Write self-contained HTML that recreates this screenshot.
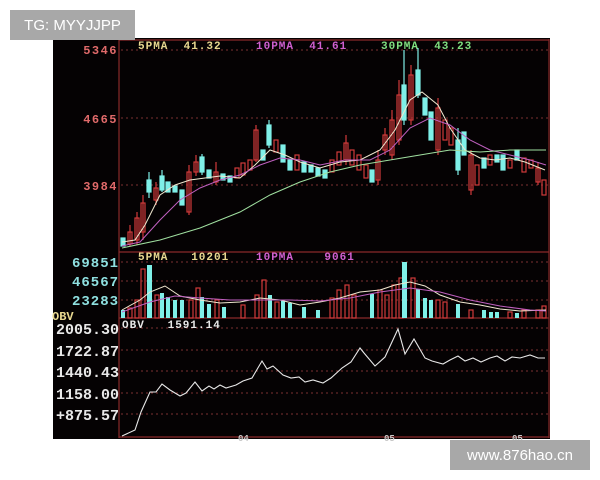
<!DOCTYPE html>
<html><head><meta charset="utf-8"><style>
html,body{margin:0;padding:0;background:#fff;width:600px;height:480px;overflow:hidden;position:relative;font-family:"Liberation Sans",sans-serif}
.wm{position:absolute;background:#a8a8a8;color:#fff;font-size:15px;display:flex;align-items:center;justify-content:center}
svg{position:absolute;left:0;top:0}
svg text{font-family:"Liberation Mono",monospace;font-weight:bold;white-space:pre}
</style></head><body>
<svg width="600" height="480" viewBox="0 0 600 480">
<rect x="53" y="38" width="497" height="401" fill="#050203"/>
<g stroke="#8a2a2a" stroke-width="1.2" fill="none">
<line x1="119" y1="39" x2="119" y2="438"/>
<line x1="119" y1="40" x2="549" y2="40"/>
<line x1="119" y1="252" x2="549" y2="252"/>
<line x1="119" y1="318" x2="549" y2="318"/>
<line x1="119" y1="437" x2="549" y2="437"/>
<line x1="549" y1="39" x2="549" y2="438"/>
</g>
<g stroke="#7a3030" stroke-width="1" stroke-dasharray="2,3">
<line x1="121" y1="50" x2="548" y2="50"/><line x1="121" y1="118" x2="548" y2="118"/><line x1="121" y1="185" x2="548" y2="185"/>
<line x1="121" y1="262" x2="548" y2="262"/><line x1="121" y1="281" x2="548" y2="281"/><line x1="121" y1="300" x2="548" y2="300"/>
<line x1="121" y1="328" x2="548" y2="328"/><line x1="121" y1="350" x2="548" y2="350"/><line x1="121" y1="371" x2="548" y2="371"/><line x1="121" y1="393" x2="548" y2="393"/><line x1="121" y1="414" x2="548" y2="414"/>
</g>
<g font-size="12" fill="#e06a6a" text-anchor="end" letter-spacing="1.5">
<text x="118" y="54">5346</text><text x="118" y="123">4665</text><text x="118" y="190">3984</text>
</g>
<g font-size="14" fill="#8fe0e0" text-anchor="end" font-weight="normal" letter-spacing="1">
<text x="119" y="267">69851</text><text x="119" y="286">46567</text><text x="119" y="305">23283</text>
</g>
<text x="52" y="320" font-size="12" fill="#e8d890">OBV</text>
<g font-size="15" fill="#e8e8e8" text-anchor="end" font-weight="normal">
<text x="119" y="334">2005.30</text><text x="119" y="356">1722.87</text><text x="119" y="377">1440.43</text><text x="119" y="399">1158.00</text><text x="119" y="420">+875.57</text>
</g>
<g font-size="11" letter-spacing="1">
<text x="138" y="49" fill="#e8d890">5PMA  41.32</text><text x="256" y="49" fill="#d060d0">10PMA  41.61</text><text x="381" y="49" fill="#80e080">30PMA  43.23</text>
<text x="138" y="260" fill="#e8d890">5PMA   10201</text><text x="256" y="260" fill="#d060d0">10PMA    9061</text>
<text x="122" y="328" fill="#e8e8e8">OBV   1591.14</text>
</g>
<!-- candles -->
<g stroke-width="1.2">
<g stroke="#d03a3a" fill="none">
<line x1="130" y1="225" x2="130" y2="246"/><rect x="128" y="232" width="4" height="12"/>
<line x1="137" y1="212" x2="137" y2="245"/><rect x="135" y="218" width="4" height="22"/>
<line x1="143" y1="195" x2="143" y2="240"/><rect x="141" y="203" width="4" height="29"/>
<line x1="156" y1="182" x2="156" y2="205"/><rect x="154" y="188" width="4" height="12"/>
<line x1="189" y1="165" x2="189" y2="215"/><rect x="187" y="172" width="4" height="40"/>
<line x1="196" y1="155" x2="196" y2="176"/><rect x="194" y="162" width="4" height="10"/>
<line x1="216" y1="162" x2="216" y2="185"/><rect x="214" y="172" width="4" height="10"/>
<rect x="235" y="168" width="4" height="10"/><rect x="241" y="163" width="4" height="12"/><rect x="248" y="160" width="4" height="10"/>
<line x1="256" y1="125" x2="256" y2="162"/><rect x="254" y="130" width="4" height="30"/>
<rect x="274" y="140" width="4" height="12"/><rect x="295" y="155" width="4" height="15"/>
<rect x="330" y="160" width="4" height="12"/><rect x="337" y="152" width="4" height="13"/>
<line x1="346" y1="135" x2="346" y2="165"/><rect x="344" y="143" width="4" height="17"/>
<rect x="350" y="150" width="4" height="15"/><rect x="357" y="155" width="4" height="15"/><rect x="364" y="165" width="4" height="13"/>
<line x1="378" y1="150" x2="378" y2="185"/><rect x="376" y="160" width="4" height="20"/>
<line x1="385" y1="128" x2="385" y2="155"/><rect x="383" y="135" width="4" height="15"/>
<line x1="392" y1="110" x2="392" y2="160"/><rect x="390" y="120" width="4" height="35"/>
<line x1="399" y1="80" x2="399" y2="145"/><rect x="397" y="95" width="4" height="45"/>
<line x1="411" y1="65" x2="411" y2="125"/><rect x="409" y="75" width="4" height="45"/>
<line x1="438" y1="98" x2="438" y2="155"/><rect x="436" y="108" width="4" height="42"/>
<rect x="443" y="120" width="4" height="20"/><rect x="449" y="128" width="4" height="17"/>
<line x1="471" y1="150" x2="471" y2="195"/><rect x="469" y="155" width="4" height="35"/>
<rect x="475" y="165" width="4" height="20"/><rect x="488" y="155" width="4" height="10"/>
<rect x="508" y="160" width="4" height="8"/><rect x="522" y="158" width="4" height="14"/><rect x="529" y="160" width="4" height="8"/>
<line x1="538" y1="162" x2="538" y2="185"/><rect x="536" y="168" width="4" height="14"/><rect x="542" y="180" width="4" height="15"/>
</g>
<g stroke="#7ff0e8" fill="#7ff0e8">
<rect x="121" y="238" width="4" height="8"/>
<line x1="149" y1="172" x2="149" y2="198"/><rect x="147" y="180" width="4" height="12"/>
<line x1="162" y1="170" x2="162" y2="192"/><rect x="160" y="176" width="4" height="14"/>
<rect x="166" y="182" width="4" height="10"/><rect x="173" y="186" width="4" height="6"/><rect x="180" y="190" width="4" height="15"/>
<line x1="202" y1="154" x2="202" y2="175"/><rect x="200" y="157" width="4" height="15"/>
<rect x="207" y="170" width="4" height="8"/><rect x="221" y="174" width="4" height="6"/><rect x="228" y="176" width="4" height="6"/>
<rect x="261" y="150" width="4" height="10"/>
<line x1="269" y1="120" x2="269" y2="148"/><rect x="267" y="125" width="4" height="20"/>
<rect x="281" y="145" width="4" height="17"/><rect x="288" y="160" width="4" height="10"/><rect x="302" y="162" width="4" height="10"/>
<rect x="309" y="165" width="4" height="7"/><rect x="316" y="168" width="4" height="8"/><rect x="323" y="170" width="4" height="8"/>
<rect x="370" y="170" width="4" height="12"/>
<line x1="404" y1="50" x2="404" y2="125"/><rect x="402" y="85" width="4" height="35"/>
<line x1="418" y1="48" x2="418" y2="98"/><rect x="416" y="70" width="4" height="25"/>
<rect x="423" y="98" width="4" height="17"/><rect x="429" y="112" width="4" height="28"/>
<line x1="458" y1="128" x2="458" y2="175"/><rect x="456" y="140" width="4" height="30"/>
<rect x="462" y="132" width="4" height="23"/><rect x="482" y="158" width="4" height="10"/><rect x="495" y="155" width="4" height="7"/>
<rect x="501" y="155" width="4" height="15"/><rect x="515" y="150" width="4" height="10"/>
</g>
</g>
<!-- MAs -->
<g fill="none" stroke-width="1">
<polyline stroke="#f0e8d0" points="122,242 135,240 145,225 160,195 175,185 190,180 205,178 220,176 240,178 255,165 270,150 285,155 300,162 320,168 340,162 360,160 380,150 395,130 410,100 422,92 438,105 450,128 465,150 480,158 495,160 510,158 525,162 545,170"/>
<polyline stroke="#c060c0" points="122,246 140,242 160,220 180,200 200,188 220,180 240,175 260,165 280,158 300,160 320,165 345,160 370,160 390,150 410,128 430,118 450,125 470,140 490,150 510,155 530,160 546,165"/>
<polyline stroke="#a0e0a0" points="122,248 160,240 200,228 240,212 270,195 300,182 330,172 360,165 390,160 420,155 450,150 480,152 510,150 546,150"/>
</g>
<!-- volume -->
<g stroke-width="1.2">
<g stroke="#d03a3a" fill="none">
<rect x="128" y="308" width="4" height="10"/><rect x="135" y="300" width="4" height="18"/><rect x="141" y="269" width="4" height="49"/>
<rect x="155" y="295" width="4" height="23"/><rect x="189" y="300" width="4" height="18"/><rect x="196" y="288" width="4" height="30"/>
<rect x="215" y="300" width="4" height="18"/><rect x="241" y="305" width="4" height="13"/><rect x="255" y="295" width="4" height="23"/>
<rect x="262" y="280" width="4" height="38"/><rect x="275" y="302" width="4" height="16"/><rect x="330" y="298" width="4" height="20"/>
<rect x="337" y="290" width="4" height="28"/><rect x="345" y="285" width="4" height="33"/><rect x="352" y="295" width="4" height="23"/>
<rect x="378" y="290" width="4" height="28"/><rect x="385" y="295" width="4" height="23"/><rect x="392" y="285" width="4" height="33"/>
<rect x="399" y="278" width="4" height="40"/><rect x="411" y="278" width="4" height="40"/><rect x="436" y="300" width="4" height="18"/>
<rect x="443" y="302" width="4" height="16"/><rect x="469" y="310" width="4" height="8"/><rect x="508" y="312" width="4" height="6"/>
<rect x="522" y="310" width="4" height="8"/><rect x="536" y="310" width="4" height="8"/><rect x="542" y="306" width="4" height="12"/>
</g>
<g fill="#7ff0e8" stroke="none">
<rect x="121" y="310" width="4" height="8"/><rect x="147" y="265" width="5" height="53"/><rect x="160" y="293" width="4" height="25"/>
<rect x="166" y="297" width="4" height="21"/><rect x="173" y="300" width="4" height="18"/><rect x="180" y="300" width="4" height="18"/>
<rect x="200" y="297" width="4" height="21"/><rect x="207" y="304" width="4" height="14"/><rect x="222" y="307" width="4" height="11"/>
<rect x="268" y="295" width="4" height="23"/><rect x="281" y="301" width="4" height="17"/><rect x="288" y="303" width="4" height="15"/>
<rect x="302" y="307" width="4" height="11"/><rect x="316" y="310" width="4" height="8"/><rect x="370" y="294" width="4" height="24"/>
<rect x="402" y="262" width="5" height="56"/><rect x="416" y="289" width="4" height="29"/><rect x="423" y="298" width="4" height="20"/>
<rect x="429" y="300" width="4" height="18"/><rect x="456" y="304" width="4" height="14"/><rect x="482" y="310" width="4" height="8"/>
<rect x="489" y="312" width="4" height="6"/><rect x="495" y="312" width="4" height="6"/><rect x="515" y="313" width="4" height="5"/>
</g>
</g>
<g fill="none" stroke-width="1">
<polyline stroke="#f0e8d0" points="122,310 140,300 150,292 165,286 180,296 200,300 220,303 240,302 260,298 280,300 300,305 320,302 340,298 360,292 380,290 395,285 410,282 425,286 440,295 460,302 480,305 500,309 520,311 546,310"/>
<polyline stroke="#c060c0" points="122,312 150,302 175,296 200,298 230,300 260,300 290,300 320,301 350,298 380,292 410,288 440,292 470,300 500,306 530,310 546,311"/>
</g>
<polyline fill="none" stroke="#e8e8e8" stroke-width="1.1" points="122,436 135,430 141,412 150,392 156,392 162,384 170,390 180,396 186,393 195,382 202,391 209,386 214,389 220,385 226,388 236,385 243,381 252,378 262,361 267,369 273,366 283,375 291,378 299,377 305,382 313,380 323,383 331,378 342,368 351,362 360,348 364,353 375,366 385,357 398,329 405,354 414,339 425,358 432,361 443,364 450,360 458,356 465,361 473,358 481,362 490,358 497,356 505,361 512,357 520,358 530,355 538,358 545,358"/>
<g font-size="9" fill="#c8c8c8" font-weight="normal"><text x="238" y="441">04</text><text x="384" y="441">05</text><text x="512" y="441">05</text></g>
</svg>
<div class="wm" style="left:10px;top:10px;width:125px;height:30px">TG: MYYJJPP</div>
<div class="wm" style="left:450px;top:440px;width:140px;height:30px">www.876hao.cn</div>
</body></html>
